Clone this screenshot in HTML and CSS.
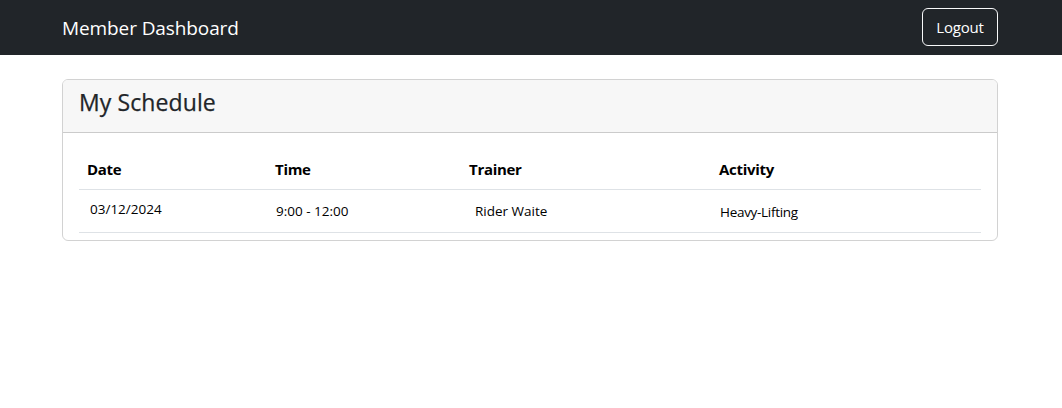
FILE: index.html
```html
<!DOCTYPE html>
<html lang="en">
<head>
<meta charset="utf-8">
<title>Member Dashboard</title>
<link rel="stylesheet" href="styles.css">
</head>
<body>
<nav class="navbar">
  <div class="container nav-inner">
    <span class="brand">Member Dashboard</span>
    <button class="btn-logout">Logout</button>
  </div>
</nav>
<main class="container">
  <section class="card">
    <header class="card-header"><h4 class="card-title">My Schedule</h4></header>
    <div class="card-body">
      <table class="table">
        <colgroup>
          <col class="c1"><col class="c2"><col class="c3"><col class="c4">
        </colgroup>
        <thead>
          <tr><th>Date</th><th>Time</th><th>Trainer</th><th>Activity</th></tr>
        </thead>
        <tbody>
          <tr>
            <td><span class="v v-date">03/12/2024</span></td>
            <td><span class="v v-time">9:00 - 12:00</span></td>
            <td><span class="v v-trainer">Rider Waite</span></td>
            <td><span class="v v-act">Heavy-Lifting</span></td>
          </tr>
        </tbody>
      </table>
    </div>
  </section>
</main>
</body>
</html>
```
FILE: styles.css
```css
* { box-sizing: border-box; }
html, body { margin: 0; padding: 0; }
body {
  font-family: "Open Sans", "Noto Sans", "Liberation Sans", sans-serif;
  font-size: 16px;
  line-height: 1.5;
  color: #212529;
  background: #fff;
}
.container {
  width: 936px;
  margin: 0 auto;
  position: relative;
  left: -1px;
}
.navbar {
  background: #212529;
  height: 55px;
}
.nav-inner {
  height: 55px;
  display: flex;
  align-items: center;
  justify-content: space-between;
}
.brand {
  color: #fff;
  font-size: 19px;
  letter-spacing: -0.1px;
  line-height: 30px;
}
.btn-logout {
  font-family: inherit;
  font-size: 15px;
  letter-spacing: -0.2px;
  color: #fff;
  background: transparent;
  border: 1px solid #f8f9fa;
  border-radius: 6px;
  height: 38px;
  width: 76px;
  padding: 0;
  line-height: 36px;
  margin-top: -1px;
}
.card {
  margin-top: 24px;
  border: 1px solid rgba(0,0,0,.175);
  border-radius: 6px;
  overflow: hidden;
}
.card-header {
  background: #f7f7f7;
  border-bottom: 1px solid rgba(0,0,0,.175);
  padding: 8px 16px;
  height: 53px;
}
.card-title {
  margin: 0;
  font-size: 23px;
  font-weight: 500;
  letter-spacing: 0.1px;
  line-height: 29px;
  -webkit-text-stroke: 0.25px #212529;
}
.card-body {
  padding: 16px 16px 7px;
}
.table {
  width: 100%;
  border-collapse: collapse;
  table-layout: fixed;
}
.c1 { width: 188px; }
.c2 { width: 194px; }
.c3 { width: 250px; }
.c4 { width: 270px; }
.table th {
  text-align: left;
  font-weight: 700;
  font-size: 15px;
  letter-spacing: -0.3px;
  padding: 8px 8px 8px 8px;
  height: 40px;
  line-height: 24px;
  border-bottom: 1px solid #dee2e6;
  color: #000;
}
.table td {
  padding: 0;
  height: 43px;
  vertical-align: top;
  border-bottom: 1px solid #dee2e6;
  font-size: 13.5px;
  color: #000;
}
.v { display: block; letter-spacing: 0; line-height: 20px; }
.v-date { padding: 9px 0 0 11px; }
.v-time { padding: 11px 0 0 9px; }
.v-trainer { padding: 11px 0 0 14px; }
.v-act { padding: 12px 0 0 9px; letter-spacing: -0.3px; }
```
